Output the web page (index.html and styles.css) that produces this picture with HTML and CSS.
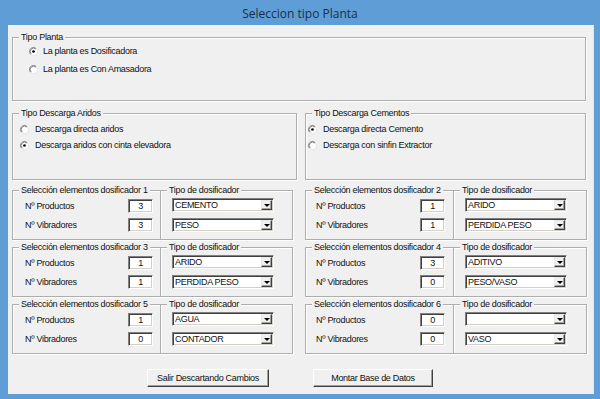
FILE: index.html
```html
<!DOCTYPE html>
<html>
<head>
<meta charset="utf-8">
<link rel="stylesheet" href="styles.css">
</head>
<body>
<div class="window">
  <div class="titlebar">Seleccion tipo Planta</div>
  <div class="client">
    <div class="group g-planta">
      <span class="legend">Tipo Planta</span>
      <div class="radio"><svg class="rb" viewBox="0 0 12 12" width="9" height="9"><circle cx="6" cy="6" r="5" fill="#fff"/><path d="M9.9 2.1A5.5 5.5 0 0 0 2.1 9.9" fill="none" stroke="#8a8a8a"/><path d="M2.1 9.9A5.5 5.5 0 0 0 9.9 2.1" fill="none" stroke="#e2e2e2"/><path d="M9.2 2.8A4.5 4.5 0 0 0 2.8 9.2" fill="none" stroke="#505050"/><circle cx="6" cy="6" r="1.8" fill="#000"/></svg><span>La planta es Dosificadora</span></div>
      <div class="radio"><svg class="rb" viewBox="0 0 12 12" width="9" height="9"><circle cx="6" cy="6" r="5" fill="#fff"/><path d="M9.9 2.1A5.5 5.5 0 0 0 2.1 9.9" fill="none" stroke="#8a8a8a"/><path d="M2.1 9.9A5.5 5.5 0 0 0 9.9 2.1" fill="none" stroke="#e2e2e2"/><path d="M9.2 2.8A4.5 4.5 0 0 0 2.8 9.2" fill="none" stroke="#505050"/></svg><span>La planta es Con Amasadora</span></div>
    </div>

    <div class="descarga">
      <div class="group g-aridos">
        <span class="legend">Tipo Descarga Aridos</span>
        <div class="radio"><svg class="rb" viewBox="0 0 12 12" width="9" height="9"><circle cx="6" cy="6" r="5" fill="#fff"/><path d="M9.9 2.1A5.5 5.5 0 0 0 2.1 9.9" fill="none" stroke="#8a8a8a"/><path d="M2.1 9.9A5.5 5.5 0 0 0 9.9 2.1" fill="none" stroke="#e2e2e2"/><path d="M9.2 2.8A4.5 4.5 0 0 0 2.8 9.2" fill="none" stroke="#505050"/></svg><span>Descarga directa aridos</span></div>
        <div class="radio"><svg class="rb" viewBox="0 0 12 12" width="9" height="9"><circle cx="6" cy="6" r="5" fill="#fff"/><path d="M9.9 2.1A5.5 5.5 0 0 0 2.1 9.9" fill="none" stroke="#8a8a8a"/><path d="M2.1 9.9A5.5 5.5 0 0 0 9.9 2.1" fill="none" stroke="#e2e2e2"/><path d="M9.2 2.8A4.5 4.5 0 0 0 2.8 9.2" fill="none" stroke="#505050"/><circle cx="6" cy="6" r="1.8" fill="#000"/></svg><span>Descarga aridos con cinta elevadora</span></div>
      </div>
      <div class="group g-cementos">
        <span class="legend">Tipo Descarga Cementos</span>
        <div class="radio"><svg class="rb" viewBox="0 0 12 12" width="9" height="9"><circle cx="6" cy="6" r="5" fill="#fff"/><path d="M9.9 2.1A5.5 5.5 0 0 0 2.1 9.9" fill="none" stroke="#8a8a8a"/><path d="M2.1 9.9A5.5 5.5 0 0 0 9.9 2.1" fill="none" stroke="#e2e2e2"/><path d="M9.2 2.8A4.5 4.5 0 0 0 2.8 9.2" fill="none" stroke="#505050"/><circle cx="6" cy="6" r="1.8" fill="#000"/></svg><span>Descarga directa Cemento</span></div>
        <div class="radio"><svg class="rb" viewBox="0 0 12 12" width="9" height="9"><circle cx="6" cy="6" r="5" fill="#fff"/><path d="M9.9 2.1A5.5 5.5 0 0 0 2.1 9.9" fill="none" stroke="#8a8a8a"/><path d="M2.1 9.9A5.5 5.5 0 0 0 9.9 2.1" fill="none" stroke="#e2e2e2"/><path d="M9.2 2.8A4.5 4.5 0 0 0 2.8 9.2" fill="none" stroke="#505050"/></svg><span>Descarga con sinfin Extractor</span></div>
      </div>
    </div>

    <div class="dos">
      <div class="pair left">
        <div class="group sel">
          <span class="legend">Selección elementos dosificador 1</span>
          <div class="field"><span>Nº Productos</span><span class="edit">3</span></div>
          <div class="field"><span>Nº Vibradores</span><span class="edit">3</span></div>
        </div>
        <div class="group tipo">
          <span class="legend">Tipo de dosificador</span>
          <div class="combo"><span class="ctext">CEMENTO</span><span class="drop"></span></div>
          <div class="combo"><span class="ctext">PESO</span><span class="drop"></span></div>
        </div>
      </div>
      <div class="pair right">
        <div class="group sel">
          <span class="legend">Selección elementos dosificador 2</span>
          <div class="field"><span>Nº Productos</span><span class="edit">1</span></div>
          <div class="field"><span>Nº Vibradores</span><span class="edit">1</span></div>
        </div>
        <div class="group tipo">
          <span class="legend">Tipo de dosificador</span>
          <div class="combo"><span class="ctext">ARIDO</span><span class="drop"></span></div>
          <div class="combo"><span class="ctext">PERDIDA PESO</span><span class="drop"></span></div>
        </div>
      </div>
    </div>

    <div class="dos">
      <div class="pair left">
        <div class="group sel">
          <span class="legend">Selección elementos dosificador 3</span>
          <div class="field"><span>Nº Productos</span><span class="edit">1</span></div>
          <div class="field"><span>Nº Vibradores</span><span class="edit">1</span></div>
        </div>
        <div class="group tipo">
          <span class="legend">Tipo de dosificador</span>
          <div class="combo"><span class="ctext">ARIDO</span><span class="drop"></span></div>
          <div class="combo"><span class="ctext">PERDIDA PESO</span><span class="drop"></span></div>
        </div>
      </div>
      <div class="pair right">
        <div class="group sel">
          <span class="legend">Selección elementos dosificador 4</span>
          <div class="field"><span>Nº Productos</span><span class="edit">3</span></div>
          <div class="field"><span>Nº Vibradores</span><span class="edit">0</span></div>
        </div>
        <div class="group tipo">
          <span class="legend">Tipo de dosificador</span>
          <div class="combo"><span class="ctext">ADITIVO</span><span class="drop"></span></div>
          <div class="combo"><span class="ctext">PESO/VASO</span><span class="drop"></span></div>
        </div>
      </div>
    </div>

    <div class="dos">
      <div class="pair left">
        <div class="group sel">
          <span class="legend">Selección elementos dosificador 5</span>
          <div class="field"><span>Nº Productos</span><span class="edit">1</span></div>
          <div class="field"><span>Nº Vibradores</span><span class="edit">0</span></div>
        </div>
        <div class="group tipo">
          <span class="legend">Tipo de dosificador</span>
          <div class="combo"><span class="ctext">AGUA</span><span class="drop"></span></div>
          <div class="combo"><span class="ctext">CONTADOR</span><span class="drop"></span></div>
        </div>
      </div>
      <div class="pair right">
        <div class="group sel">
          <span class="legend">Selección elementos dosificador 6</span>
          <div class="field"><span>Nº Productos</span><span class="edit">0</span></div>
          <div class="field"><span>Nº Vibradores</span><span class="edit">0</span></div>
        </div>
        <div class="group tipo">
          <span class="legend">Tipo de dosificador</span>
          <div class="combo"><span class="ctext"></span><span class="drop"></span></div>
          <div class="combo"><span class="ctext">VASO</span><span class="drop"></span></div>
        </div>
      </div>
    </div>

    <div class="buttons">
      <button class="btn btn-salir">Salir Descartando Cambios</button>
      <button class="btn btn-montar">Montar Base de Datos</button>
    </div>
  </div>
</div>
</body>
</html>
```

FILE: styles.css
```css
* { box-sizing: border-box; }
html, body { margin: 0; padding: 0; }
body {
  width: 600px;
  height: 399px;
  overflow: hidden;
  background: #5e9dd6;
  font-family: "Liberation Sans", Arial, sans-serif;
  font-size: 9px;
  letter-spacing: -0.3px;
  color: #111;
}
.window {
  width: 600px;
  height: 399px;
  background: #5e9dd6;
  display: flex;
  flex-direction: column;
}
.titlebar {
  height: 25px;
  display: flex;
  align-items: center;
  justify-content: center;
  font-family: "Open Sans", sans-serif;
  font-size: 12px;
  letter-spacing: 0;
  color: #1b2d45;
  padding-top: 1px;
}
.client {
  margin-left: 8px;
  width: 585px;
  height: 369px;
  background: #f0f0f0;
  padding: 12px 0 0 4px;
  display: flex;
  flex-direction: column;
  box-shadow: 1px 0 0 #dfe9f4;
}
.group {
  position: relative;
  border: 1px solid #adadad;
  box-shadow: inset 1px 1px 0 #fff, 1px 1px 0 #fff;
}
.legend {
  position: absolute;
  top: -6px;
  left: 6px;
  padding: 0 2px;
  background: #f0f0f0;
  line-height: 11px;
  white-space: nowrap;
}
.radio {
  display: flex;
  align-items: center;
  gap: 5px;
  height: 18px;
  white-space: nowrap;
}
.rb { flex: none; }

.g-planta {
  width: 574px;
  height: 64px;
  padding: 4px 0 0 16px;
}

.descarga {
  display: flex;
  gap: 8px;
  margin-top: 12px;
  height: 67px;
}
.descarga .radio { height: 16px; gap: 6px; }
.g-aridos { width: 285px; padding: 7px 0 0 7px; }
.g-cementos { width: 281px; padding: 7px 0 0 2px; }

.dos {
  display: flex;
  gap: 12px;
  margin-top: 10px;
  height: 50px;
}
.dos + .dos { margin-top: 7px; }
.pair { display: flex; }
.pair.left { width: 281px; }
.pair.right { width: 282px; }

.sel {
  width: 148px;
  border-right: none;
  padding: 8px 7px 0 12px;
  display: flex;
  flex-direction: column;
  gap: 5px;
}
.pair.right .sel { padding: 8px 8px 0 10px; }
.tipo {
  flex: 1;
  padding: 7px 0 0 11px;
  display: flex;
  flex-direction: column;
  gap: 6px;
}
.field {
  display: flex;
  align-items: center;
  justify-content: space-between;
  height: 14px;
}
.edit {
  width: 25px;
  height: 14px;
  background: #fff;
  border: 1px solid;
  border-color: #808080 #fff #fff #808080;
  box-shadow: inset 1px 1px 0 #404040, inset -1px -1px 0 #d4d0c8;
  text-align: center;
  line-height: 12px;
}
.combo {
  width: 102px;
  height: 14px;
  background: #fff;
  border: 1px solid;
  border-color: #808080 #fff #fff #808080;
  box-shadow: inset 1px 1px 0 #404040, inset -1px -1px 0 #d4d0c8;
  display: flex;
  align-items: center;
  padding: 1px 1px 1px 2px;
}
.ctext {
  flex: 1;
  line-height: 10px;
  white-space: nowrap;
}
.drop {
  width: 11px;
  height: 10px;
  background: #f0f0f0;
  border: 1px solid;
  border-color: #e8e8e8 #404040 #404040 #e8e8e8;
  box-shadow: inset -1px -1px 0 #a0a0a0;
  display: flex;
  align-items: center;
  justify-content: center;
}
.drop::after {
  content: "";
  width: 0;
  height: 0;
  border-left: 3px solid transparent;
  border-right: 3px solid transparent;
  border-top: 3px solid #000;
  margin-top: 1px;
}
.buttons {
  display: flex;
  gap: 44px;
  margin-top: 15px;
  padding-left: 135px;
}
.btn {
  height: 18px;
  background: #f0f0f0;
  border: 1px solid;
  border-color: #fff #404040 #404040 #fff;
  box-shadow: inset -1px -1px 0 #a0a0a0;
  font: inherit;
  letter-spacing: inherit;
  color: #111;
  padding: 0;
}
.btn-salir { width: 122px; }
.btn-montar { width: 120px; }
```
